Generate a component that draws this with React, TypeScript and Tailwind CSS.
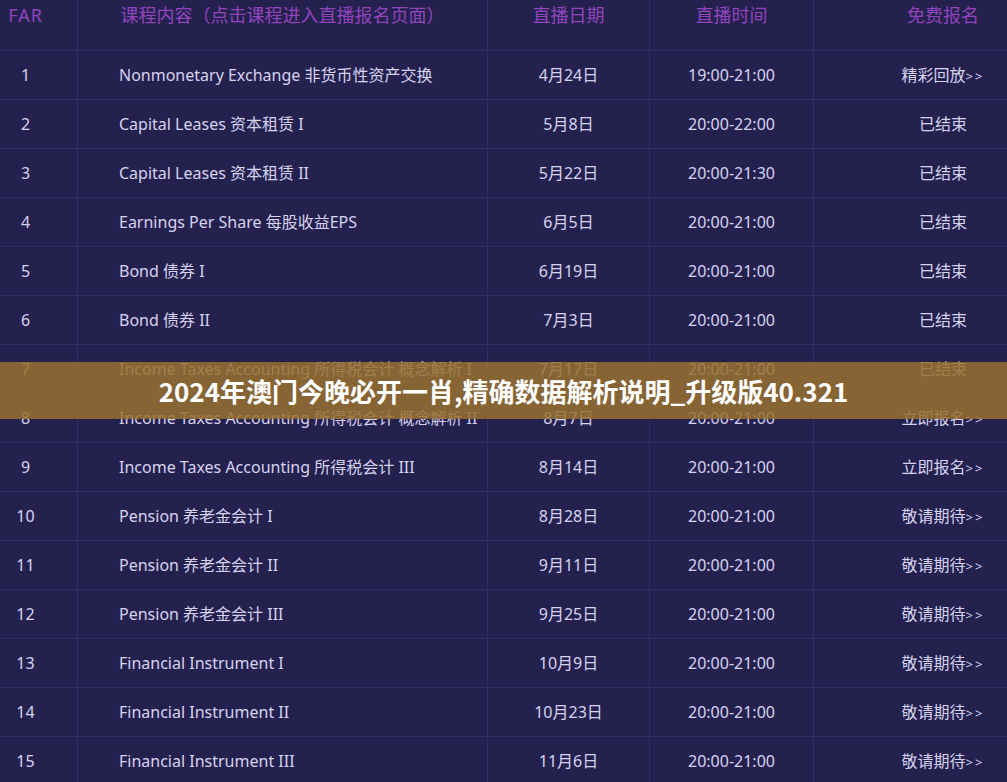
import React from "react"

type Row = {
  no: number
  title: string
  date: string
  time: string
  status: string
}

const rows: Row[] = [
  { no: 1, title: "Nonmonetary Exchange 非货币性资产交换", date: "4月24日", time: "19:00-21:00", status: "精彩回放>>" },
  { no: 2, title: "Capital Leases 资本租赁 I", date: "5月8日", time: "20:00-22:00", status: "已结束" },
  { no: 3, title: "Capital Leases 资本租赁 II", date: "5月22日", time: "20:00-21:30", status: "已结束" },
  { no: 4, title: "Earnings Per Share 每股收益EPS", date: "6月5日", time: "20:00-21:00", status: "已结束" },
  { no: 5, title: "Bond 债券 I", date: "6月19日", time: "20:00-21:00", status: "已结束" },
  { no: 6, title: "Bond 债券 II", date: "7月3日", time: "20:00-21:00", status: "已结束" },
  { no: 7, title: "Income Taxes Accounting 所得税会计 概念解析 I", date: "7月17日", time: "20:00-21:00", status: "已结束" },
  { no: 8, title: "Income Taxes Accounting 所得税会计 概念解析 II", date: "8月7日", time: "20:00-21:00", status: "立即报名>>" },
  { no: 9, title: "Income Taxes Accounting 所得税会计 III", date: "8月14日", time: "20:00-21:00", status: "立即报名>>" },
  { no: 10, title: "Pension 养老金会计 I", date: "8月28日", time: "20:00-21:00", status: "敬请期待>>" },
  { no: 11, title: "Pension 养老金会计 II", date: "9月11日", time: "20:00-21:00", status: "敬请期待>>" },
  { no: 12, title: "Pension 养老金会计 III", date: "9月25日", time: "20:00-21:00", status: "敬请期待>>" },
  { no: 13, title: "Financial Instrument I", date: "10月9日", time: "20:00-21:00", status: "敬请期待>>" },
  { no: 14, title: "Financial Instrument II", date: "10月23日", time: "20:00-21:00", status: "敬请期待>>" },
  { no: 15, title: "Financial Instrument III", date: "11月6日", time: "20:00-21:00", status: "敬请期待>>" },
]

const font = { fontFamily: '"Noto Sans", "Noto Sans CJK SC", sans-serif' }

// status text: the ">>" part is drawn a bit smaller and spaced out
function Status({ text }: { text: string }) {
  if (!text.endsWith(">>")) return <span>{text}</span>
  return (
    <span>
      {text.slice(0, -2)}
      <span className="text-[13px] tracking-[2px]">&gt;&gt;</span>
    </span>
  )
}

export default function App() {
  return (
    <div className="relative w-[1007px] h-[782px] overflow-hidden bg-[#25214f]" style={font}>
      {/* header */}
      <div className="flex h-[51px] border-b border-[#332f66] text-[18px] text-[#9045bd]">
        <div className="w-[78px] shrink-0 border-r border-[#332f66] pr-[26px] pt-[2px] text-center tracking-[1px]">
          FAR
        </div>
        <div className="w-[410px] shrink-0 border-r border-[#332f66] pt-[2px] text-center">
          课程内容（点击课程进入直播报名页面）
        </div>
        <div className="w-[162px] shrink-0 border-r border-[#332f66] pt-[2px] text-center">直播日期</div>
        <div className="w-[164px] shrink-0 border-r border-[#332f66] pt-[2px] text-center">直播时间</div>
        <div className="w-[258px] shrink-0 pt-[2px] text-center">免费报名</div>
      </div>

      {/* rows */}
      {rows.map((r) => (
        <div key={r.no} className="flex h-[49px] border-b border-[#332f66] text-[16px] text-[#d6d3ef]">
          <div className="flex w-[78px] shrink-0 items-center justify-center border-r border-[#332f66] pr-[26px]">
            {r.no}
          </div>
          <div className="flex w-[410px] shrink-0 items-center border-r border-[#332f66] pl-[41px] whitespace-nowrap">
            {r.title}
          </div>
          <div className="flex w-[162px] shrink-0 items-center justify-center border-r border-[#332f66]">
            {r.date}
          </div>
          <div className="flex w-[164px] shrink-0 items-center justify-center border-r border-[#332f66]">
            {r.time}
          </div>
          <div className="flex w-[258px] shrink-0 items-center justify-center">
            <Status text={r.status} />
          </div>
        </div>
      ))}

      {/* caption banner over the table */}
      <div className="absolute left-0 right-0 top-[362px] flex h-[57px] items-center justify-center bg-[#98702f]/85">
        <span
          className="text-[26px] font-bold text-white whitespace-nowrap"
          style={{ fontFamily: '"Noto Sans CJK SC", "Noto Sans", sans-serif' }}
        >
          2024年澳门今晚必开一肖,精确数据解析说明_升级版40.321
        </span>
      </div>
    </div>
  )
}
